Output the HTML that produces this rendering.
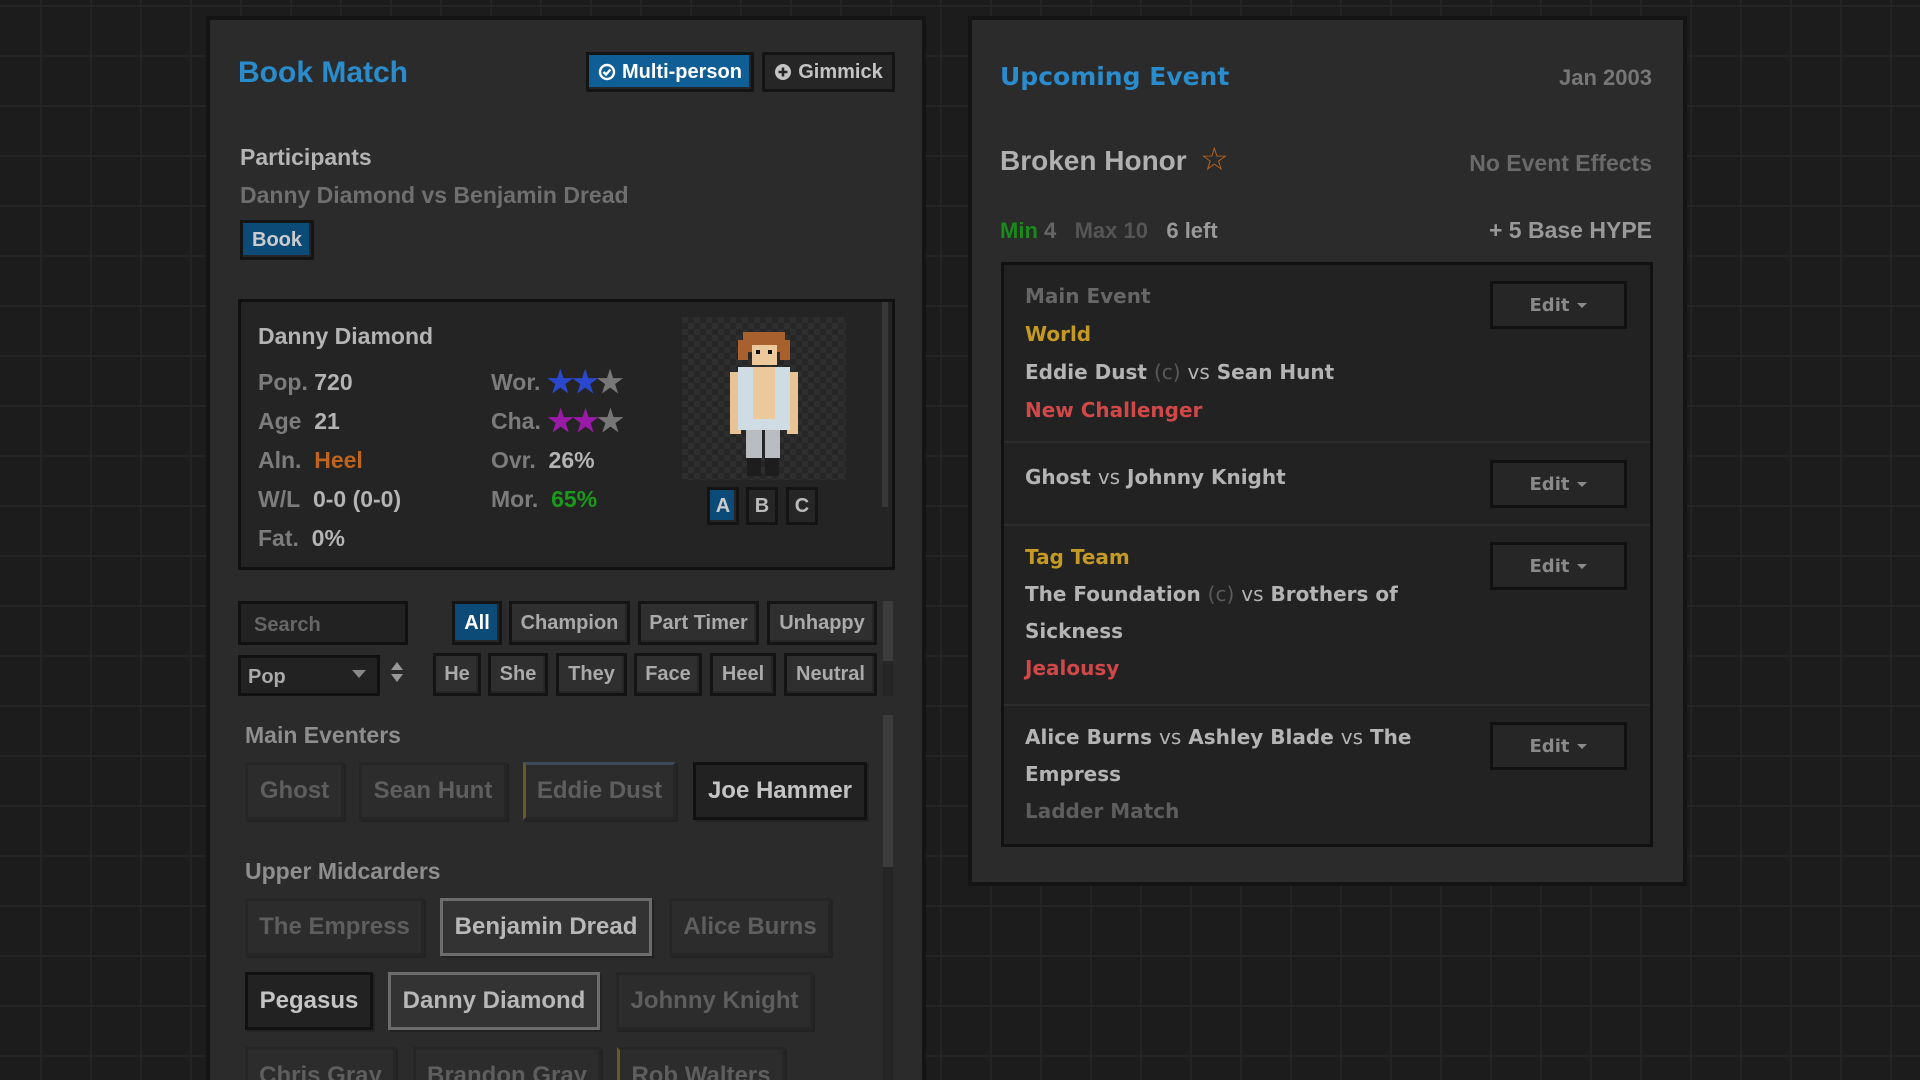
<!DOCTYPE html>
<html style="overflow:hidden"><head><meta charset="utf-8"><style>
*{box-sizing:border-box;margin:0;padding:0}
html,body{width:1920px;height:1080px;overflow:hidden}
body{background:#1c1c1c;
background-image:linear-gradient(#242424 2px,transparent 2px),linear-gradient(90deg,#242424 2px,transparent 2px);
background-size:50px 50px;background-position:0 5px,40px 0;
font-family:"Liberation Sans",Arial,sans-serif;font-weight:bold;position:relative}
.a{position:absolute;white-space:nowrap}
.panel{position:absolute;background:#2b2b2b;border:4px solid #141414}
.btn{position:absolute;border:3px solid #141414;background:#2f2f2f;color:#aaa;font-size:20px;display:flex;align-items:center;justify-content:center;box-shadow:inset -2px -2px 0 #262626}
.nb{position:absolute;background:#2c2c2c;border:3px solid #262626;color:#5e5e5e;font-size:24px;display:flex;align-items:center;justify-content:center;box-shadow:2px 2px 0 #222}
.lbl{color:#7c7c7c}.val{color:#b4b4b4}
.r{font-family:"DejaVu Sans","Liberation Sans",sans-serif}
.edit{position:absolute;left:1490px;width:137px;height:48px;border:3px solid #111;background:#262626;color:#8a8a8a;font-size:18px;display:flex;align-items:center;justify-content:center}
.edit:after{content:"";border:5px solid transparent;border-top:5px solid #8a8a8a;margin:6px 0 0 8px;width:0;height:0}
.st{font-size:30px;letter-spacing:-2px;vertical-align:-2px}
</style></head><body>

<div class="panel" style="left:206px;top:16px;width:720px;height:1064px;border-bottom:0"></div>
<div class="a" style="left:238px;top:56px;font-size:30px;color:#2a8ccc">Book Match</div>
<div class="btn" style="left:586px;top:52px;width:168px;height:40px;background:#0f5f96;color:#fff;font-size:20px">
<svg width="18" height="18" viewBox="0 0 18 18" style="margin-right:6px"><circle cx="9" cy="9" r="7" fill="none" stroke="#fff" stroke-width="2.4"/><path d="M5.5 9l2.5 2.5 4.5-5" fill="none" stroke="#fff" stroke-width="2.4"/></svg>Multi-person</div>
<div class="btn" style="left:762px;top:52px;width:133px;height:40px;background:#262626;color:#c4c4c4">
<svg width="18" height="18" viewBox="0 0 18 18" style="margin-right:6px"><circle cx="9" cy="9" r="8" fill="#c4c4c4"/><path d="M9 4.5v9M4.5 9h9" stroke="#262626" stroke-width="2.6"/></svg>Gimmick</div>

<div class="a" style="left:240px;top:144px;font-size:23px;color:#b4b4b4">Participants</div>
<div class="a" style="left:240px;top:182px;font-size:23px;color:#6f6f6f">Danny Diamond vs Benjamin Dread</div>
<div class="btn" style="left:240px;top:220px;width:74px;height:40px;background:#0c4a78;color:#ccc;font-size:20px">Book</div>

<div class="a" style="left:238px;top:299px;width:657px;height:271px;background:#242424;border:3px solid #111"></div>
<div class="a" style="left:882px;top:302px;width:6px;height:205px;background:#383838"></div>
<div class="a" style="left:258px;top:323px;font-size:23px;color:#b4b4b4">Danny Diamond</div>
<div class="a" style="left:258px;top:363px;font-size:23px;line-height:39px">
<div><span class="lbl">Pop.</span> <span class="val">720</span></div>
<div><span class="lbl">Age</span>&nbsp; <span class="val">21</span></div>
<div><span class="lbl">Aln.</span>&nbsp; <span style="color:#c0631c">Heel</span></div>
<div><span class="lbl">W/L</span>&nbsp; <span class="val">0-0 (0-0)</span></div>
<div><span class="lbl">Fat.</span>&nbsp; <span class="val">0%</span></div>
</div>
<div class="a" style="left:491px;top:363px;font-size:23px;line-height:39px">
<div><span class="lbl">Wor.</span> <span class="st"><span style="color:#2a48cc">★★</span><span style="color:#777">★</span></span></div>
<div><span class="lbl">Cha.</span> <span class="st"><span style="color:#9a1aa8">★★</span><span style="color:#777">★</span></span></div>
<div><span class="lbl">Ovr.</span>&nbsp; <span class="val">26%</span></div>
<div><span class="lbl">Mor.</span>&nbsp; <span style="color:#1a9a1a">65%</span></div>
</div>
<svg class="a" style="left:682px;top:317px" width="164" height="163" viewBox="0 0 164 163">
<defs><pattern id="ck" width="12" height="12" patternUnits="userSpaceOnUse"><rect width="12" height="12" fill="#262626"/><rect width="6" height="6" fill="#2e2e2e"/><rect x="6" y="6" width="6" height="6" fill="#2e2e2e"/></pattern></defs>
<rect width="164" height="163" fill="url(#ck)"/>
<g transform="translate(-2,-7)">
<rect x="67" y="146" width="14" height="20" fill="#1d1d1d"/><rect x="85" y="146" width="14" height="20" fill="#1d1d1d"/>
<rect x="66" y="110" width="34" height="38" fill="#b9bcc0"/><rect x="82" y="118" width="3" height="30" fill="#262626"/>
<rect x="50" y="62" width="11" height="62" fill="#e8c494"/><rect x="107" y="62" width="11" height="62" fill="#e8c494"/>
<rect x="58" y="57" width="52" height="63" fill="#cfdce4"/>
<rect x="73" y="57" width="22" height="52" fill="#ecc99b"/>
<rect x="63" y="22" width="42" height="20" fill="#a8602f"/><rect x="58" y="30" width="10" height="20" fill="#a8602f"/><rect x="100" y="30" width="10" height="20" fill="#a8602f"/>
<rect x="72" y="35" width="25" height="20" fill="#ecc99b"/>
<rect x="76" y="40" width="4" height="4" fill="#111"/><rect x="88" y="40" width="4" height="4" fill="#111"/>
</g></svg>
<div class="btn" style="left:707px;top:487px;width:32px;height:38px;background:#0c4a78;color:#ccc">A</div>
<div class="btn" style="left:746px;top:487px;width:32px;height:38px;background:#262626;color:#bbb">B</div>
<div class="btn" style="left:786px;top:487px;width:32px;height:38px;background:#262626;color:#bbb">C</div>

<div class="a" style="left:238px;top:601px;width:170px;height:44px;background:#222;border:3px solid #111;color:#666;font-size:20px;padding:10px 0 0 13px">Search</div>
<div class="btn" style="left:452px;top:601px;width:50px;height:44px;background:#0c4a78;color:#fff">All</div>
<div class="btn" style="left:509px;top:601px;width:121px;height:44px">Champion</div>
<div class="btn" style="left:638px;top:601px;width:121px;height:44px">Part Timer</div>
<div class="btn" style="left:767px;top:601px;width:110px;height:44px">Unhappy</div>
<div class="a" style="left:238px;top:655px;width:142px;height:41px;background:#222;border:3px solid #111;color:#aaa;font-size:20px;padding:8px 0 0 7px">Pop</div>
<div class="a" style="left:352px;top:670px;border:7px solid transparent;border-top:8px solid #888"></div>
<div class="a" style="left:391px;top:662px;border:6px solid transparent;border-bottom:8px solid #999;border-top:0"></div>
<div class="a" style="left:391px;top:674px;border:6px solid transparent;border-top:8px solid #999;border-bottom:0"></div>
<div class="btn" style="left:433px;top:653px;width:48px;height:43px">He</div>
<div class="btn" style="left:488px;top:653px;width:60px;height:43px">She</div>
<div class="btn" style="left:556px;top:653px;width:71px;height:43px">They</div>
<div class="btn" style="left:634px;top:653px;width:68px;height:43px">Face</div>
<div class="btn" style="left:710px;top:653px;width:66px;height:43px">Heel</div>
<div class="btn" style="left:784px;top:653px;width:93px;height:43px">Neutral</div>
<div class="a" style="left:883px;top:601px;width:10px;height:95px;background:#262626"></div>
<div class="a" style="left:883px;top:601px;width:10px;height:60px;background:#3c3c3c"></div>
<div class="a" style="left:883px;top:715px;width:10px;height:370px;background:#262626"></div>
<div class="a" style="left:883px;top:715px;width:10px;height:152px;background:#3c3c3c"></div>

<div class="a" style="left:245px;top:722px;font-size:23px;color:#8e8e8e">Main Eventers</div>
<div class="nb" style="left:245px;top:762px;width:99px;height:58px">Ghost</div>
<div class="nb" style="left:359px;top:762px;width:148px;height:58px">Sean Hunt</div>
<div class="nb" style="left:523px;top:762px;width:153px;height:58px;border-top-color:#3e4a58;border-left-color:#6a5a2a">Eddie Dust</div>
<div class="nb" style="left:693px;top:762px;width:174px;height:58px;background:#222;border-color:#111;color:#c4c4c4">Joe Hammer</div>
<div class="a" style="left:245px;top:858px;font-size:23px;color:#8e8e8e">Upper Midcarders</div>
<div class="nb" style="left:245px;top:898px;width:179px;height:58px">The Empress</div>
<div class="nb" style="left:440px;top:898px;width:212px;height:58px;background:#333;border-color:#6c6c6c;color:#b8b8b8">Benjamin Dread</div>
<div class="nb" style="left:669px;top:898px;width:162px;height:58px">Alice Burns</div>
<div class="nb" style="left:245px;top:972px;width:128px;height:58px;background:#222;border-color:#111;color:#c4c4c4">Pegasus</div>
<div class="nb" style="left:388px;top:972px;width:212px;height:58px;background:#333;border-color:#6c6c6c;color:#b8b8b8">Danny Diamond</div>
<div class="nb" style="left:616px;top:972px;width:197px;height:58px">Johnny Knight</div>
<div class="nb" style="left:245px;top:1047px;width:151px;height:58px">Chris Gray</div>
<div class="nb" style="left:413px;top:1047px;width:188px;height:58px">Brandon Gray</div>
<div class="nb" style="left:617px;top:1047px;width:168px;height:58px;border-left-color:#6a5a2a">Rob Walters</div>

<div class="panel" style="left:968px;top:16px;width:719px;height:870px"></div>
<div class="a r" style="left:1000px;top:62px;font-size:25px;color:#2a8ccc">Upcoming Event</div>
<div class="a" style="right:268px;top:65px;font-size:22px;color:#777">Jan 2003</div>
<div class="a" style="left:1000px;top:145px;font-size:28px;color:#b0b0b0">Broken Honor</div>
<div class="a" style="left:1200px;top:140px;font-size:32px;color:#c0661c;font-weight:normal">☆</div>
<div class="a" style="right:268px;top:150px;font-size:23px;color:#6a6a6a">No Event Effects</div>
<div class="a" style="left:1000px;top:218px;font-size:22px"><span style="color:#1a8a1a">Min</span> <span style="color:#666">4</span>&nbsp;&nbsp; <span style="color:#555">Max 10</span>&nbsp;&nbsp; <span style="color:#999">6 left</span></div>
<div class="a" style="right:268px;top:217px;font-size:23px;color:#999">+ 5 Base HYPE</div>

<div class="a" style="left:1001px;top:262px;width:652px;height:585px;background:#222;border:3px solid #111"></div>
<div class="a" style="left:1004px;top:441px;width:646px;height:2px;background:#2c2c2c"></div>
<div class="a" style="left:1004px;top:524px;width:646px;height:2px;background:#2c2c2c"></div>
<div class="a" style="left:1004px;top:704px;width:646px;height:2px;background:#2c2c2c"></div>
<div class="a r" style="left:1025px;top:277px;font-size:20px;line-height:38px;color:#b4b4b4">
<div style="color:#666">Main Event</div>
<div style="color:#c49a24">World</div>
<div>Eddie Dust <span style="color:#5a5a5a;font-weight:normal">(c)</span> <span style="font-weight:normal">vs</span> Sean Hunt</div>
<div style="color:#d04848">New Challenger</div>
</div>
<div class="a r" style="left:1025px;top:458px;font-size:20px;line-height:38px;color:#b4b4b4">Ghost <span style="font-weight:normal">vs</span> Johnny Knight</div>
<div class="a r" style="left:1025px;top:539px;font-size:20px;line-height:37px;color:#b4b4b4">
<div style="color:#c49a24">Tag Team</div>
<div>The Foundation <span style="color:#5a5a5a;font-weight:normal">(c)</span> <span style="font-weight:normal">vs</span> Brothers of</div>
<div>Sickness</div>
<div style="color:#d04848">Jealousy</div>
</div>
<div class="a r" style="left:1025px;top:719px;font-size:20px;line-height:37px;color:#b4b4b4">
<div>Alice Burns <span style="font-weight:normal">vs</span> Ashley Blade <span style="font-weight:normal">vs</span> The</div>
<div>Empress</div>
<div style="color:#5e5e5e">Ladder Match</div>
</div>
<div class="edit r" style="top:281px">Edit</div>
<div class="edit r" style="top:460px">Edit</div>
<div class="edit r" style="top:542px">Edit</div>
<div class="edit r" style="top:722px">Edit</div>
</body></html>
